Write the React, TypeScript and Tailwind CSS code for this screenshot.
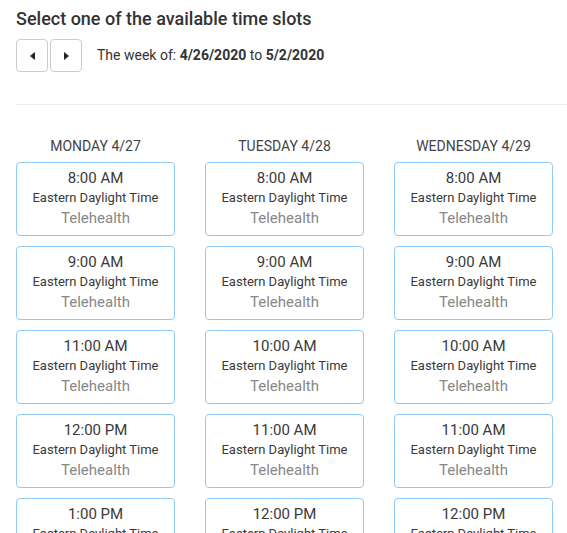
import { Fragment } from 'react';

const days = [
  { label: 'MONDAY 4/27', slots: ['8:00 AM', '9:00 AM', '11:00 AM', '12:00 PM', '1:00 PM'] },
  { label: 'TUESDAY 4/28', slots: ['8:00 AM', '9:00 AM', '10:00 AM', '11:00 AM', '12:00 PM'] },
  { label: 'WEDNESDAY 4/29', slots: ['8:00 AM', '9:00 AM', '10:00 AM', '11:00 AM', '12:00 PM'] },
];

function Caret({ dir }: { dir: 'left' | 'right' }) {
  return (
    <svg width="5" height="8" viewBox="0 0 5 8" className="text-[#222]">
      {dir === 'left' ? <polygon points="5,0 0,4 5,8" fill="currentColor" /> : <polygon points="0,0 5,4 0,8" fill="currentColor" />}
    </svg>
  );
}

export default function App() {
  return (
    <div className="h-[533px] overflow-hidden bg-white pl-4 font-['Roboto',sans-serif] text-[#333]">
      <h1 className="pt-[7px] text-[18px] leading-[24px] font-medium text-[#333]">Select one of the available time slots</h1>
      <div className="mt-[8px] flex items-center">
        <button className="flex h-[33px] w-[32px] items-center justify-center rounded-[4px] border border-[#ccc] bg-white">
          <Caret dir="left" />
        </button>
        <button className="ml-[2px] flex h-[33px] w-[32px] items-center justify-center rounded-[4px] border border-[#ccc] bg-white">
          <Caret dir="right" />
        </button>
        <p className="ml-[15px] text-[14px] text-[#333]">
          The week of: <span className="font-bold">4/26/2020</span> to <span className="font-bold">5/2/2020</span>
        </p>
      </div>
      <div className="mt-[32px] border-t border-[#eee]" />
      <div className="mt-[32px] flex gap-[30px]">
        {days.map((d) => (
          <div key={d.label} className="flex w-[159px] flex-col">
            <div className="text-center text-[14px] leading-[18px] text-[#444]">{d.label}</div>
            <div className="mt-[7px] flex flex-col gap-[10px]">
              {d.slots.map((s) => (
                <Fragment key={s}>
                  <div className="flex h-[74px] flex-col items-center rounded-[4px] border border-[#90caf9] pt-[5px]">
                    <div className="text-[15px] leading-[20px] text-[#3a3a3a]">{s}</div>
                    <div className="text-[13px] leading-[20px] text-[#3a3a3a]">Eastern Daylight Time</div>
                    <div className="text-[15px] leading-[20px] text-[#888]">Telehealth</div>
                  </div>
                </Fragment>
              ))}
            </div>
          </div>
        ))}
      </div>
    </div>
  );
}
